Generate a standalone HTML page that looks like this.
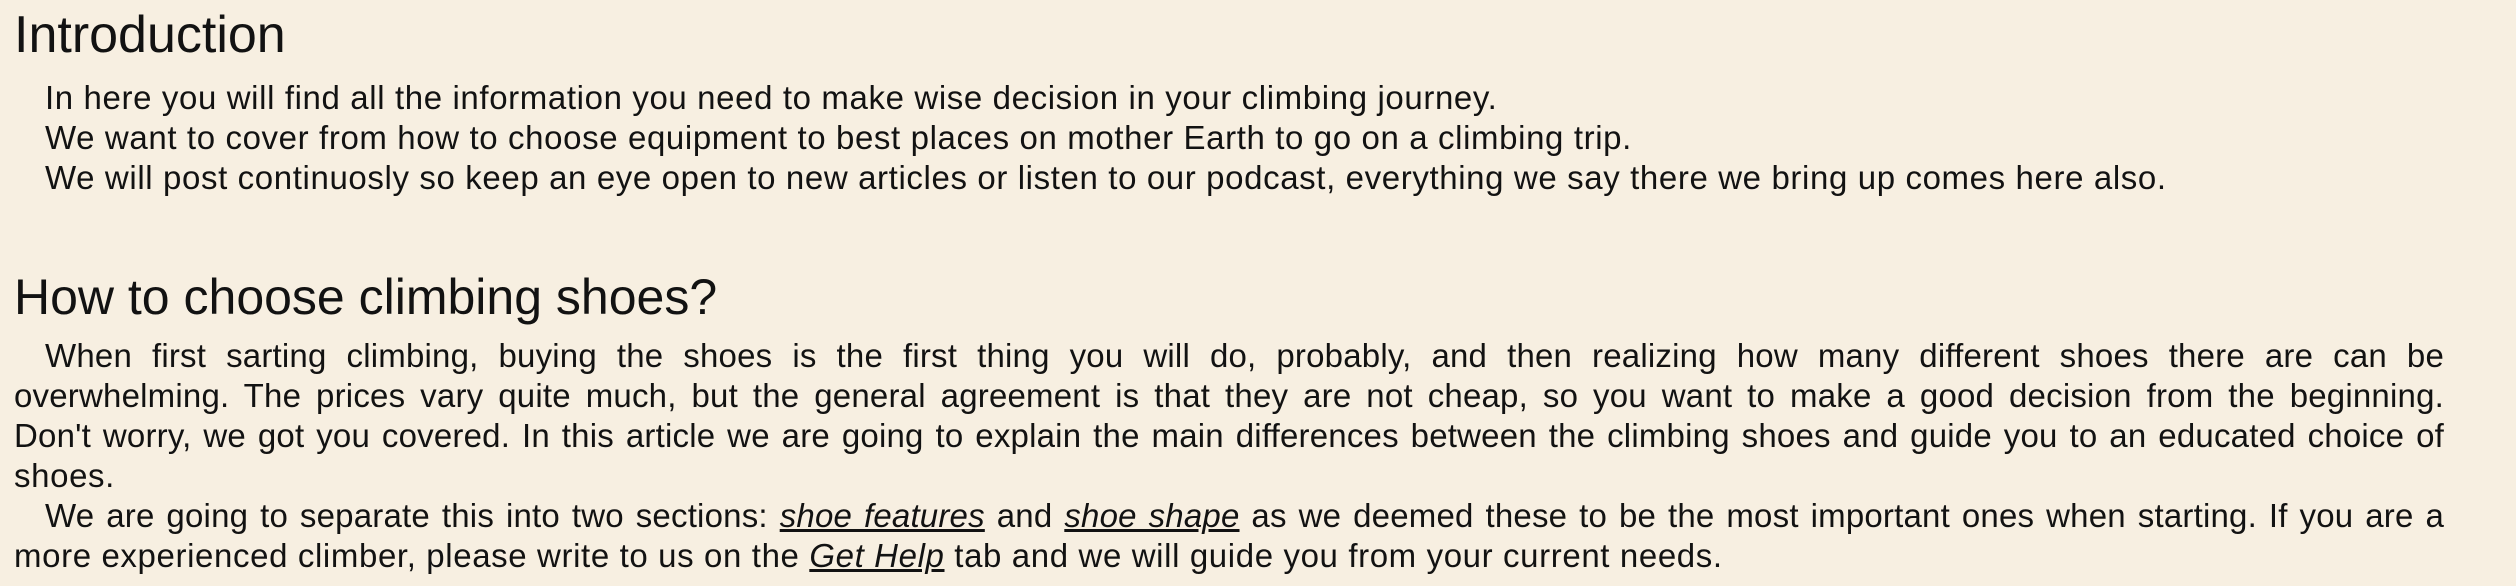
<!DOCTYPE html>
<html><head><meta charset="utf-8"><style>
html,body{margin:0;padding:0;background:#f7efe1;width:2516px;height:586px;overflow:hidden}
body{font-family:"Liberation Sans",sans-serif;color:#121212;position:relative}
.h{position:absolute;left:14px;font-size:52px;line-height:60px;white-space:nowrap}
.l{position:absolute;left:14px;width:2430px;font-size:33px;letter-spacing:0.62px;line-height:40px;white-space:nowrap}
.j{text-align:justify;text-align-last:justify;letter-spacing:0.2px}
.i{padding-left:31px;box-sizing:border-box}
a{color:inherit;font-style:italic;text-decoration:underline}
</style></head><body>
<div class="h" style="top:5px">Introduction</div>
<div class="l i" style="top:78px">In here you will find all the information you need to make wise decision in your climbing journey.</div>
<div class="l i" style="top:118px">We want to cover from how to choose equipment to best places on mother Earth to go on a climbing trip.</div>
<div class="l i" style="top:158px">We will post continuosly so keep an eye open to new articles or listen to our podcast, everything we say there we bring up comes here also.</div>
<div class="h" style="top:267px;font-size:50px">How to choose climbing shoes?</div>
<div class="l i j" style="top:336px">When first sarting climbing, buying the shoes is the first thing you will do, probably, and then realizing how many different shoes there are can be</div>
<div class="l j" style="top:376px">overwhelming. The prices vary quite much, but the general agreement is that they are not cheap, so you want to make a good decision from the beginning.</div>
<div class="l j" style="top:416px">Don't worry, we got you covered. In this article we are going to explain the main differences between the climbing shoes and guide you to an educated choice of</div>
<div class="l" style="top:456px">shoes.</div>
<div class="l i j" style="top:496px">We are going to separate this into two sections: <a>shoe features</a> and <a>shoe shape</a> as we deemed these to be the most important ones when starting. If you are a</div>
<div class="l" style="top:536px">more experienced climber, please write to us on the <a>Get Help</a> tab and we will guide you from your current needs.</div>
</body></html>
